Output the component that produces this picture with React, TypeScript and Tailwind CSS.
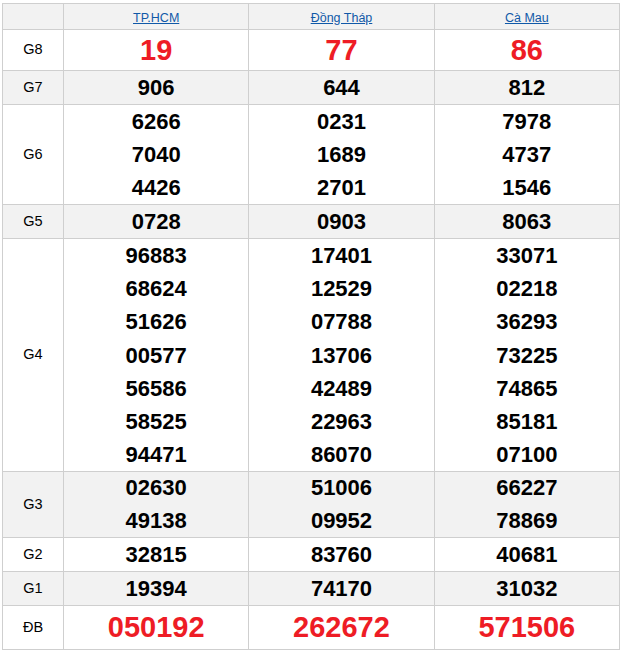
const provinces = ["TP.HCM", "Đồng Tháp", "Cà Mau"];

type Row = {
    label: string;
    values: string[][];
    big?: boolean;
    lineHeight: string;
};

const rows: Row[] = [
    { label: "G8", values: [["19"], ["77"], ["86"]], big: true, lineHeight: "leading-[40px]" },
    { label: "G7", values: [["906"], ["644"], ["812"]], lineHeight: "leading-[33px]" },
    {
        label: "G6",
        values: [
            ["6266", "7040", "4426"],
            ["0231", "1689", "2701"],
            ["7978", "4737", "1546"],
        ],
        lineHeight: "leading-[33px]",
    },
    { label: "G5", values: [["0728"], ["0903"], ["8063"]], lineHeight: "leading-[33px]" },
    {
        label: "G4",
        values: [
            ["96883", "68624", "51626", "00577", "56586", "58525", "94471"],
            ["17401", "12529", "07788", "13706", "42489", "22963", "86070"],
            ["33071", "02218", "36293", "73225", "74865", "85181", "07100"],
        ],
        lineHeight: "leading-[33.2px]",
    },
    {
        label: "G3",
        values: [
            ["02630", "49138"],
            ["51006", "09952"],
            ["66227", "78869"],
        ],
        lineHeight: "leading-[32.5px]",
    },
    { label: "G2", values: [["32815"], ["83760"], ["40681"]], lineHeight: "leading-[33px]" },
    { label: "G1", values: [["19394"], ["74170"], ["31032"]], lineHeight: "leading-[33px]" },
    { label: "ĐB", values: [["050192"], ["262672"], ["571506"]], big: true, lineHeight: "leading-[43px]" },
];

const App = () => {
    return (
        <div className="pt-[3px] pl-[2px] bg-white font-['Liberation_Sans',Arial,sans-serif]">
            <table className="w-[618px] border-collapse table-fixed">
                <colgroup>
                    <col className="w-[61px]" />
                    <col />
                    <col />
                    <col />
                </colgroup>
                <thead>
                    <tr className="bg-[#f2f2f2]">
                        <th className="border border-[#cfcfcf] h-[26px] p-0"></th>
                        {provinces.map((p) => (
                            <th key={p} className="border border-[#cfcfcf] h-[26px] p-0 font-normal">
                                <a href="#" className="text-[12.5px] text-[#1059a8] underline">
                                    {p}
                                </a>
                            </th>
                        ))}
                    </tr>
                </thead>
                <tbody>
                    {rows.map((row, i) => (
                        <tr key={row.label} className={i % 2 === 1 ? "bg-[#f2f2f2]" : "bg-white"}>
                            <td className="border border-[#cfcfcf] p-0 text-center text-[14.5px] text-black">
                                {row.label}
                            </td>
                            {row.values.map((col, j) => (
                                <td key={j} className="border border-[#cfcfcf] p-0 text-center">
                                    {col.map((v) => (
                                        <div
                                            key={v}
                                            className={
                                                row.big
                                                    ? `${row.lineHeight} text-[29px] font-bold text-[#ee1c25]`
                                                    : `${row.lineHeight} text-[22px] font-bold text-black`
                                            }
                                        >
                                            {v}
                                        </div>
                                    ))}
                                </td>
                            ))}
                        </tr>
                    ))}
                </tbody>
            </table>
        </div>
    );
};

export default App;
